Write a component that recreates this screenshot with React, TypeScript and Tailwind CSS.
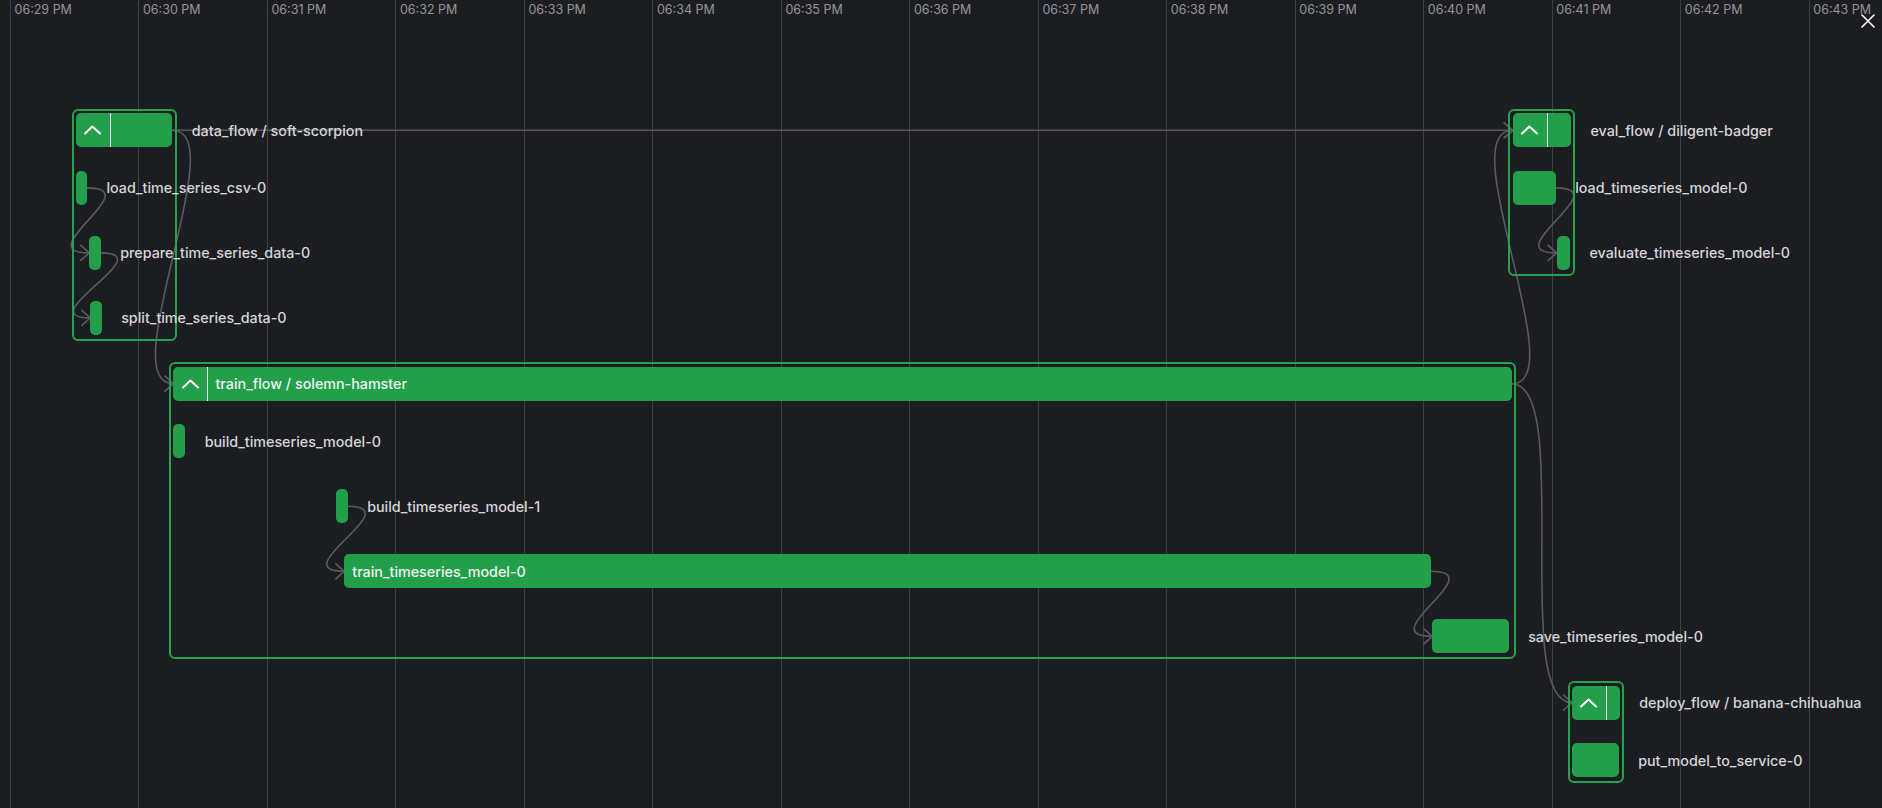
import React from "react";

type Task = { name: string; off: number; w: number; inside?: boolean };
type Group = { name: string; x: number; y: number; hw: number; inside?: boolean; tasks: Task[] };

const H = 34; // bar height
const BW = 2; // group border width
const PX = 2.4; // group horizontal padding
const PT = 2.3; // group top padding
const PB = 3.8; // group bottom padding
const FIRST = 23.6; // header -> first task
const GAP = 31; // task -> task
const D = 62; // edge curvature

const times = [
  "06:29 PM", "06:30 PM", "06:31 PM", "06:32 PM", "06:33 PM", "06:34 PM", "06:35 PM", "06:36 PM",
  "06:37 PM", "06:38 PM", "06:39 PM", "06:40 PM", "06:41 PM", "06:42 PM", "06:43 PM",
];

const groups: Group[] = [
  {
    name: "data_flow / soft-scorpion", x: 71.6, y: 109, hw: 96.3,
    tasks: [
      { name: "load_time_series_csv-0", off: 0, w: 11 },
      { name: "prepare_time_series_data-0", off: 13.3, w: 11.4 },
      { name: "split_time_series_data-0", off: 14.3, w: 11.4 },
    ],
  },
  {
    name: "eval_flow / diligent-badger", x: 1508.3, y: 109, hw: 58.3,
    tasks: [
      { name: "load_timeseries_model-0", off: 0, w: 43 },
      { name: "evaluate_timeseries_model-0", off: 44, w: 13.3 },
    ],
  },
  {
    name: "train_flow / solemn-hamster", x: 169.1, y: 362.4, hw: 1338.2, inside: true,
    tasks: [
      { name: "build_timeseries_model-0", off: 0, w: 11.7 },
      { name: "build_timeseries_model-1", off: 162.5, w: 11.7 },
      { name: "train_timeseries_model-0", off: 170.8, w: 1086.7, inside: true },
      { name: "save_timeseries_model-0", off: 1258.8, w: 76.4 },
    ],
  },
  {
    name: "deploy_flow / banana-chihuahua", x: 1567.6, y: 681.4, hw: 47.7,
    tasks: [{ name: "put_model_to_service-0", off: 0, w: 46.7 }],
  },
];

type Pt = [number, number];
const hx = (g: Group) => g.x + BW + PX;
const hy = (g: Group) => g.y + BW + PT;
const headerL = (gi: number): Pt => [hx(groups[gi]), hy(groups[gi]) + H / 2];
const headerR = (gi: number): Pt => [hx(groups[gi]) + groups[gi].hw, hy(groups[gi]) + H / 2];
const rowY = (g: Group, i: number) => hy(g) + H + FIRST + i * (H + GAP) + H / 2;
const taskL = (gi: number, ti: number): Pt => {
  const g = groups[gi];
  return [hx(g) + g.tasks[ti].off, rowY(g, ti)];
};
const taskR = (gi: number, ti: number): Pt => {
  const g = groups[gi];
  return [hx(g) + g.tasks[ti].off + g.tasks[ti].w, rowY(g, ti)];
};

const edges: [Pt, Pt][] = [
  [headerR(0), headerL(2)],
  [headerR(0), headerL(1)],
  [taskR(0, 0), taskL(0, 1)],
  [taskR(0, 1), taskL(0, 2)],
  [taskR(1, 0), taskL(1, 1)],
  [headerR(2), headerL(1)],
  [headerR(2), headerL(3)],
  [taskR(2, 1), taskL(2, 2)],
  [taskR(2, 2), taskL(2, 3)],
];

function Chevron() {
  return (
    <svg width="17" height="10" viewBox="0 0 17 10" className="block">
      <polyline points="1,8.5 8.5,1.5 16,8.5" fill="none" stroke="white" strokeWidth="2" strokeLinecap="round" strokeLinejoin="round" />
    </svg>
  );
}

const labelCls = "whitespace-nowrap text-[14.3px] font-medium";

function FlowGroup({ g }: { g: Group }) {
  return (
    <div
      className="absolute flex flex-col rounded-[6px] border-2 border-[#25a24e] px-[2.4px] pb-[3.8px] pt-[2.3px]"
      style={{ left: g.x, top: g.y, width: g.hw + 2 * (BW + PX) }}
    >
      <div className="flex h-[34px] items-center">
        <div className="flex h-full shrink-0 overflow-hidden rounded-[5px] bg-[#239f4b]" style={{ width: g.hw }}>
          <div className="flex h-full w-[35px] shrink-0 items-center justify-center border-r border-[#e8f3eb]">
            <Chevron />
          </div>
          {g.inside && <div className={`flex items-center pl-[7px] text-[#eef4f0] ${labelCls}`}>{g.name}</div>}
        </div>
        {!g.inside && <div className={`ml-[19.5px] text-[#d6d6db] ${labelCls}`}>{g.name}</div>}
      </div>
      <div className="mt-[23.6px] flex flex-col gap-[31px]">
        {g.tasks.map((tk) => (
          <div key={tk.name} className="flex h-[34px] items-center" style={{ marginLeft: tk.off }}>
            <div className="flex h-full shrink-0 items-center rounded-[5px] bg-[#239f4b]" style={{ width: tk.w }}>
              {tk.inside && <span className={`pl-[8px] text-[#eef4f0] ${labelCls}`}>{tk.name}</span>}
            </div>
            {!tk.inside && <div className={`ml-[19.5px] text-[#d6d6db] ${labelCls}`}>{tk.name}</div>}
          </div>
        ))}
      </div>
    </div>
  );
}

export default function App() {
  return (
    <div className="relative h-[808px] w-full overflow-hidden bg-[#1c1d21] font-['Inter','Noto_Sans',sans-serif]">
      <div className="flex h-full pl-[10px]">
        {times.map((tm) => (
          <div
            key={tm}
            className="h-full w-[128.49px] shrink-0 border-l border-[#3e3f45] pl-[3.5px] pt-[1px] text-[12.5px] leading-[18px] text-[#94959b]"
          >
            {tm}
          </div>
        ))}
      </div>

      <div className="absolute inset-0">
        <svg className="absolute left-0 top-0" width="1882" height="808">
          {edges.map(([[x1, y1], [x2, y2]], i) => (
            <g key={i} fill="none" stroke="#5a5b62" strokeWidth="1.6" strokeLinecap="round" strokeLinejoin="round">
              <path d={`M${x1} ${y1} C${x1 + D} ${y1} ${x2 - D} ${y2} ${x2} ${y2}`} />
              <path d={`M${x2 - 8.5} ${y2 - 7.5} L${x2} ${y2} L${x2 - 8.5} ${y2 + 7.5}`} />
            </g>
          ))}
        </svg>
        {groups.map((g) => (
          <FlowGroup key={g.name} g={g} />
        ))}
      </div>

      <button className="absolute right-[7px] top-[14px] flex h-[14px] w-[14px] items-center justify-center">
        <svg width="14" height="14" viewBox="0 0 14 14">
          <path d="M1 1 L13 13 M13 1 L1 13" stroke="white" strokeWidth="1.6" strokeLinecap="round" />
        </svg>
      </button>
    </div>
  );
}
